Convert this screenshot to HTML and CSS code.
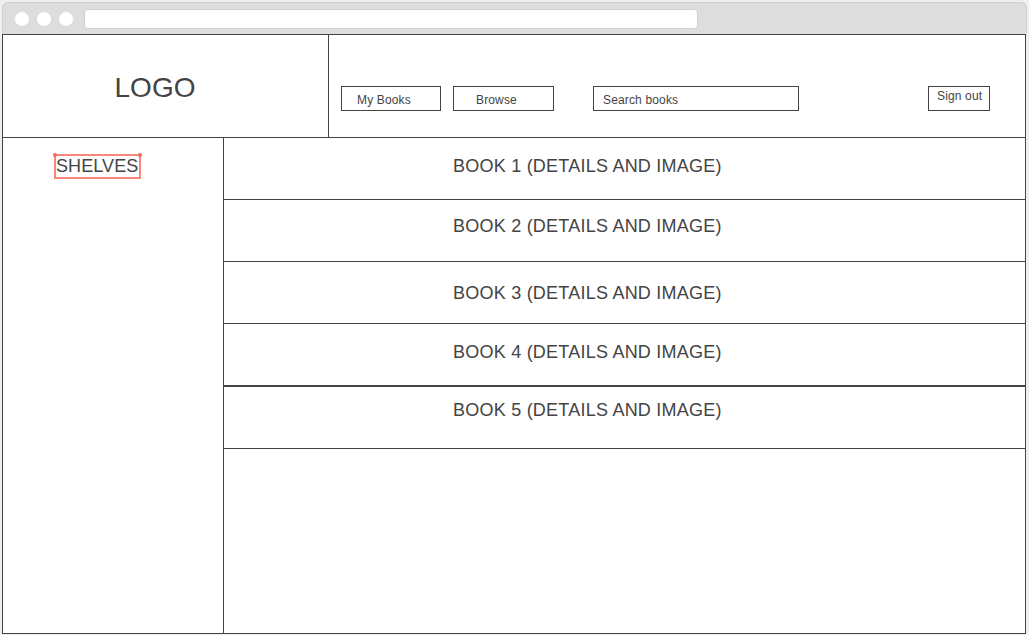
FILE: index.html
```html
<!DOCTYPE html>
<html lang="en">
<head>
<meta charset="utf-8">
<title>Books wireframe</title>
<link rel="stylesheet" href="styles.css">
</head>
<body>
<div class="window">
  <div class="chrome">
    <span class="dot"></span>
    <span class="dot"></span>
    <span class="dot"></span>
    <div class="address"></div>
  </div>
  <div class="frame">
    <header class="header">
      <div class="logo-cell"><span class="logo">LOGO</span></div>
      <nav class="nav">
        <div class="btn btn-mybooks">My Books</div>
        <div class="btn btn-browse">Browse</div>
        <div class="btn btn-search">Search books</div>
        <div class="btn btn-signout">Sign out</div>
      </nav>
    </header>
    <div class="body">
      <aside class="sidebar">
        <div class="shelves">SHELVES</div>
      </aside>
      <main class="books">
        <div class="book book-1">BOOK 1 (DETAILS AND IMAGE)</div>
        <div class="book book-2">BOOK 2 (DETAILS AND IMAGE)</div>
        <div class="book book-3">BOOK 3 (DETAILS AND IMAGE)</div>
        <div class="book book-4">BOOK 4 (DETAILS AND IMAGE)</div>
        <div class="book book-5">BOOK 5 (DETAILS AND IMAGE)</div>
      </main>
    </div>
  </div>
</div>
</body>
</html>
```

FILE: styles.css
```css
* { box-sizing: border-box; }

html, body {
  margin: 0;
  padding: 0;
  background: #efefef;
  font-family: "Liberation Sans", Arial, sans-serif;
  color: #444;
}

.window {
  margin: 2px 0 0 2px;
  width: 1024px;
}

.chrome {
  height: 32px;
  width: 1025px;
  background: #dddddd;
  border: 1px solid #cfcfcf;
  border-bottom: none;
  border-radius: 6px 6px 0 0;
  display: flex;
  align-items: center;
  padding-left: 12px;
}

.dot {
  width: 14px;
  height: 14px;
  border-radius: 50%;
  background: #ffffff;
  margin-right: 8px;
  margin-top: 1px;
}

.address {
  margin-left: 3px;
  width: 614px;
  height: 20px;
  background: #ffffff;
  border: 1px solid #d2d2d2;
  border-radius: 4px;
  margin-top: 1px;
}

.frame {
  height: 600px;
  border: 1px solid #444;
  background: #ffffff;
  display: flex;
  flex-direction: column;
}

.header {
  height: 103px;
  border-bottom: 1px solid #444;
  display: flex;
}

.logo-cell {
  width: 326px;
  border-right: 1px solid #444;
  display: flex;
  align-items: center;
  justify-content: center;
  padding-right: 21px;
  padding-top: 4px;
}

.logo {
  font-size: 28px;
  line-height: 32px;
  color: #444;
}

.nav {
  flex: 1;
  display: flex;
  align-items: flex-start;
  padding: 51px 0 0 12px;
}

.btn {
  height: 25px;
  border: 1px solid #444;
  font-size: 12px;
  line-height: 23px;
  padding-top: 2px;
  color: #444;
  letter-spacing: 0.15px;
  white-space: nowrap;
}

.btn-mybooks { width: 100px; padding-left: 15px; }
.btn-browse { width: 101px; margin-left: 12px; padding-left: 22px; }
.btn-search { width: 206px; margin-left: 39px; padding-left: 9px; }
.btn-signout { width: 62px; margin-left: 129px; padding-left: 8px; padding-top: 0; line-height: 18px; }

.body {
  flex: 1;
  display: flex;
}

.sidebar {
  width: 221px;
  border-right: 1px solid #444;
  padding: 16px 0 0 51px;
}

.shelves {
  position: relative;
  display: inline-block;
  border: 2px solid #f7877a;
  font-size: 18px;
  line-height: 21px;
  padding: 0 1px 0 0;
  color: #444;
  letter-spacing: 0.1px;
}

.shelves::before,
.shelves::after {
  content: "";
  position: absolute;
  top: -3px;
  width: 4px;
  height: 4px;
  border-radius: 50%;
  background: #ef6a5a;
}
.shelves::before { left: -3px; }
.shelves::after { right: -3px; }

.books {
  flex: 1;
  display: flex;
  flex-direction: column;
}

.book {
  height: 62px;
  border-bottom: 1px solid #444;
  font-size: 18px;
  line-height: 21px;
  padding-left: 229px;
  color: #444;
  letter-spacing: 0.23px;
  white-space: nowrap;
}

.book-1 { padding-top: 18px; }
.book-2 { padding-top: 16px; }
.book-3 { padding-top: 21px; }
.book-4 { padding-top: 18px; height: 63px; border-bottom-width: 2px; }
.book-5 { padding-top: 13px; }
```
